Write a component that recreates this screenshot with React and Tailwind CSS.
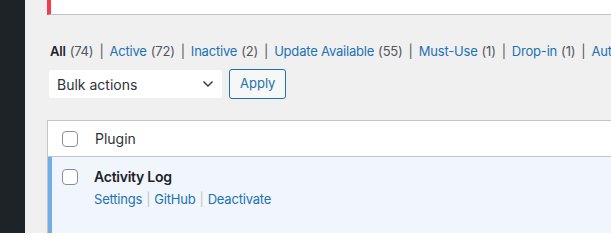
import React from "react";

const F = { fontFamily: "Inter, 'Noto Sans', sans-serif" };

function Sep({ light }) {
  return <span className={light ? "mx-[4px] text-[#c3c4c7]" : "mx-[6px] text-[#50575e]"}>|</span>;
}

function Filter({ label, count, current, last }) {
  return (
    <>
      <span className={current ? "font-semibold text-[#1d2327]" : "text-[#2271b1]"}>{label}</span>
      <span className="ml-[4px] text-[#50575e]">({count})</span>
      {!last && <Sep />}
    </>
  );
}

function Checkbox() {
  return <span className="block h-[16px] w-[16px] shrink-0 rounded-[4px] border border-[#8c8f94] bg-white" />;
}

export default function App() {
  return (
    <div className="flex h-[233px] w-[611px] overflow-hidden bg-[#f0f0f1] text-[13px] text-[#3c434a]" style={F}>
      <div className="w-[25px] shrink-0 bg-[#1d2327]" />
      <div className="min-w-0 flex-1 overflow-hidden pl-[22px]">
        <div className="h-[15px] w-[700px] border-b border-l-4 border-b-[#c3c4c7] border-l-[#f43c4a] bg-white" />
        <div className="mt-[27px] flex h-[18px] items-center whitespace-nowrap pl-[3px] leading-[18px] tracking-[-0.2px]">
          <Filter label="All" count="74" current />
          <Filter label="Active" count="72" />
          <Filter label="Inactive" count="2" />
          <Filter label="Update Available" count="55" />
          <Filter label="Must-Use" count="1" />
          <Filter label="Drop-in" count="1" />
          <span className="text-[#2271b1]">Auto-updates Disabled</span>
        </div>
        <div className="mt-[9px] flex items-center gap-[7px] pl-[2px]">
          <div className="flex h-[28px] w-[173px] items-center justify-between rounded-[3px] bg-white pl-[8px] pr-[8px] text-[14px] text-[#2c3338]">
            <span>Bulk actions</span>
            <svg width="12" height="8" viewBox="0 0 12 8" fill="none">
              <path d="M1.5 1.5L6 6L10.5 1.5" stroke="#2c3338" strokeWidth="1.4" />
            </svg>
          </div>
          <div className="flex h-[30px] items-center rounded-[3px] border border-[#2271b1] bg-[#f6f7f7] px-[10px] text-[13px] text-[#2271b1]">
            Apply
          </div>
        </div>
        <div className="mt-[21px] w-[700px] border border-[#c3c4c7] bg-white">
          <div className="flex h-[36px] items-center border-b border-[#c3c4c7] pl-[14px]">
            <Checkbox />
            <span className="ml-[17px] text-[14px] text-[#2c3338]">Plugin</span>
          </div>
          <div className="flex h-[80px] border-l-4 border-[#72aee6] bg-[#f0f6fc] pl-[10px] pt-[12px]">
            <Checkbox />
            <div className="ml-[16px] -mt-[3px]">
              <div className="text-[14px] font-semibold leading-[22px] tracking-[-0.25px] text-[#1d2327]">Activity Log</div>
              <div className="mt-[2px] leading-[18px] tracking-[-0.2px] text-[#2271b1]">
                Settings<Sep light />GitHub<Sep light />Deactivate
              </div>
            </div>
          </div>
        </div>
      </div>
    </div>
  );
}
